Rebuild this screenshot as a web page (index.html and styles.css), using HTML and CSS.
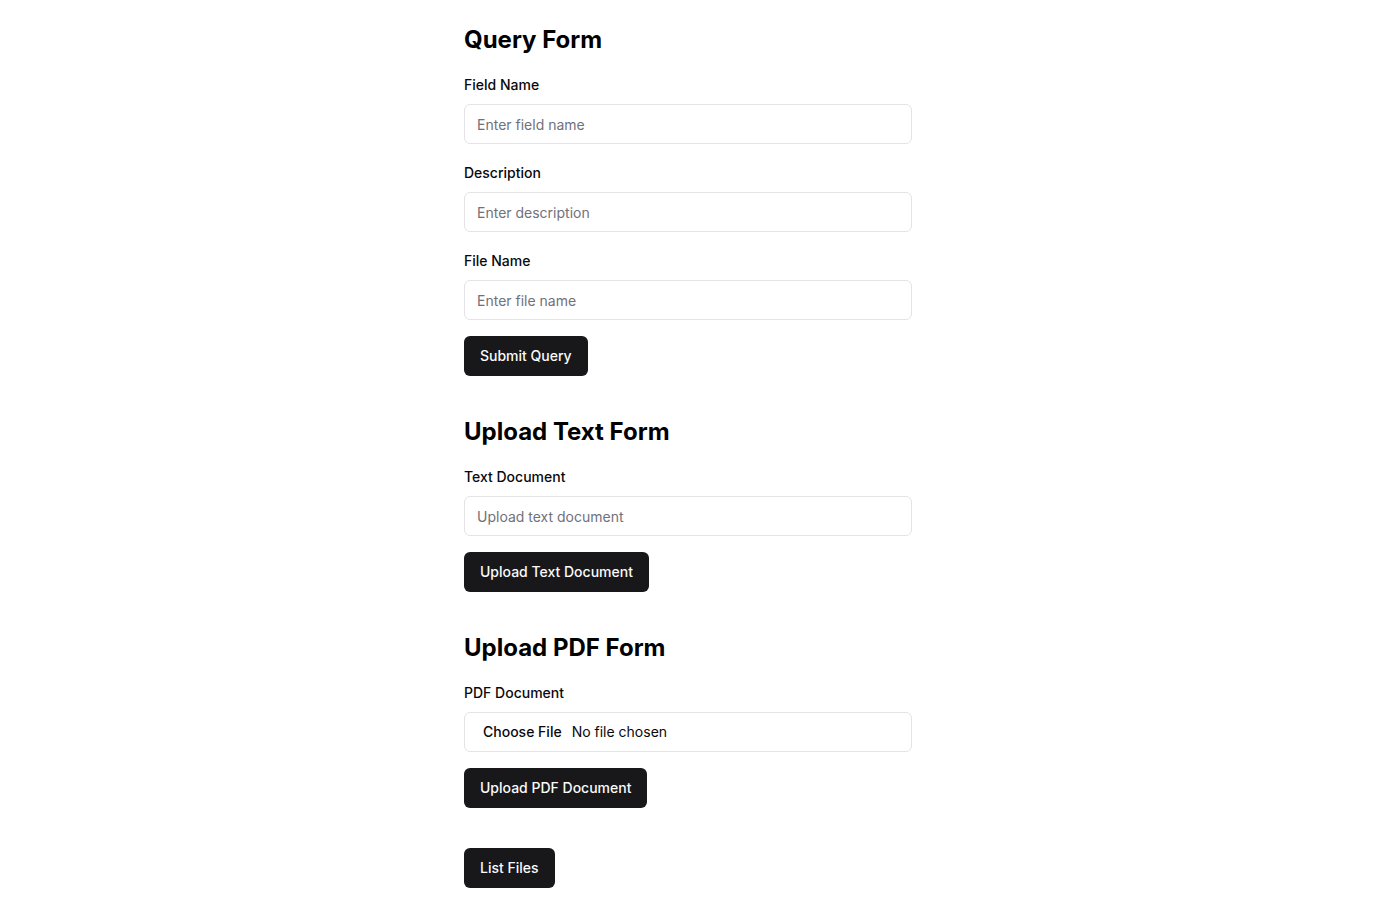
FILE: index.html
```html
<!DOCTYPE html>
<html lang="en">
<head>
<meta charset="utf-8">
<title>Forms</title>
<link rel="stylesheet" href="styles.css">
</head>
<body>
<main class="page">
  <section class="section">
    <h2 class="title">Query Form</h2>
    <form class="form">
      <div class="field">
        <label class="label" for="field-name">Field Name</label>
        <input class="input" id="field-name" type="text" placeholder="Enter field name">
      </div>
      <div class="field">
        <label class="label" for="description">Description</label>
        <input class="input" id="description" type="text" placeholder="Enter description">
      </div>
      <div class="field last">
        <label class="label" for="file-name">File Name</label>
        <input class="input" id="file-name" type="text" placeholder="Enter file name">
      </div>
      <button class="btn" type="button">Submit Query</button>
    </form>
  </section>
  <section class="section">
    <h2 class="title">Upload Text Form</h2>
    <form class="form">
      <div class="field last">
        <label class="label" for="text-doc">Text Document</label>
        <input class="input" id="text-doc" type="text" placeholder="Upload text document">
      </div>
      <button class="btn" type="button">Upload Text Document</button>
    </form>
  </section>
  <section class="section">
    <h2 class="title">Upload PDF Form</h2>
    <form class="form">
      <div class="field last">
        <label class="label" for="pdf-doc">PDF Document</label>
        <input class="input file" id="pdf-doc" type="file" accept="application/pdf">
      </div>
      <button class="btn" type="button">Upload PDF Document</button>
    </form>
  </section>
  <section class="section">
    <button class="btn" type="button">List Files</button>
  </section>
</main>
</body>
</html>
```
FILE: styles.css
```css
* { box-sizing: border-box; }
html, body { margin: 0; padding: 0; background: #ffffff; }
body {
  font-family: Inter, "Noto Sans", "Liberation Sans", sans-serif;
  color: #09090b;
}
.page {
  max-width: 448px;
  margin: 0 auto;
  padding-top: 24px;
  display: flex;
  flex-direction: column;
  gap: 40px;
}
.section { display: flex; flex-direction: column; align-items: flex-start; }
.title {
  margin: 0 0 18px;
  font-size: 24px;
  line-height: 32px;
  font-weight: 700;
  color: #000;
}
.form { display: flex; flex-direction: column; align-items: flex-start; width: 100%; }
.field { width: 100%; display: flex; flex-direction: column; margin-bottom: 18px; }
.field.last { margin-bottom: 16px; }
.label {
  font-size: 14px;
  line-height: 20px;
  font-weight: 500;
  margin: 1px 0 9px;
  color: #09090b;
}
.input {
  width: 100%;
  height: 40px;
  border: 1px solid #e4e4e7;
  border-radius: 6px;
  padding: 8px 12px;
  font-family: inherit;
  font-size: 14px;
  color: #09090b;
  background: #fff;
  outline: none;
}
.input::placeholder { color: #71717a; }
.input.file { padding: 9px 12px; font-size: 14px; line-height: 20px; color: #09090b; }
.input.file::file-selector-button {
  border: 0;
  background: transparent;
  font-family: inherit;
  font-size: 14px;
  font-weight: 500;
  color: #09090b;
  padding: 1px 6px;
  margin: 0 4px 0 0;
}
.btn {
  height: 40px;
  padding: 0 16px 2px;
  border: 0;
  border-radius: 6px;
  background: #18181b;
  color: #fafafa;
  font-family: inherit;
  font-size: 14px;
  font-weight: 500;
  cursor: pointer;
}
```
